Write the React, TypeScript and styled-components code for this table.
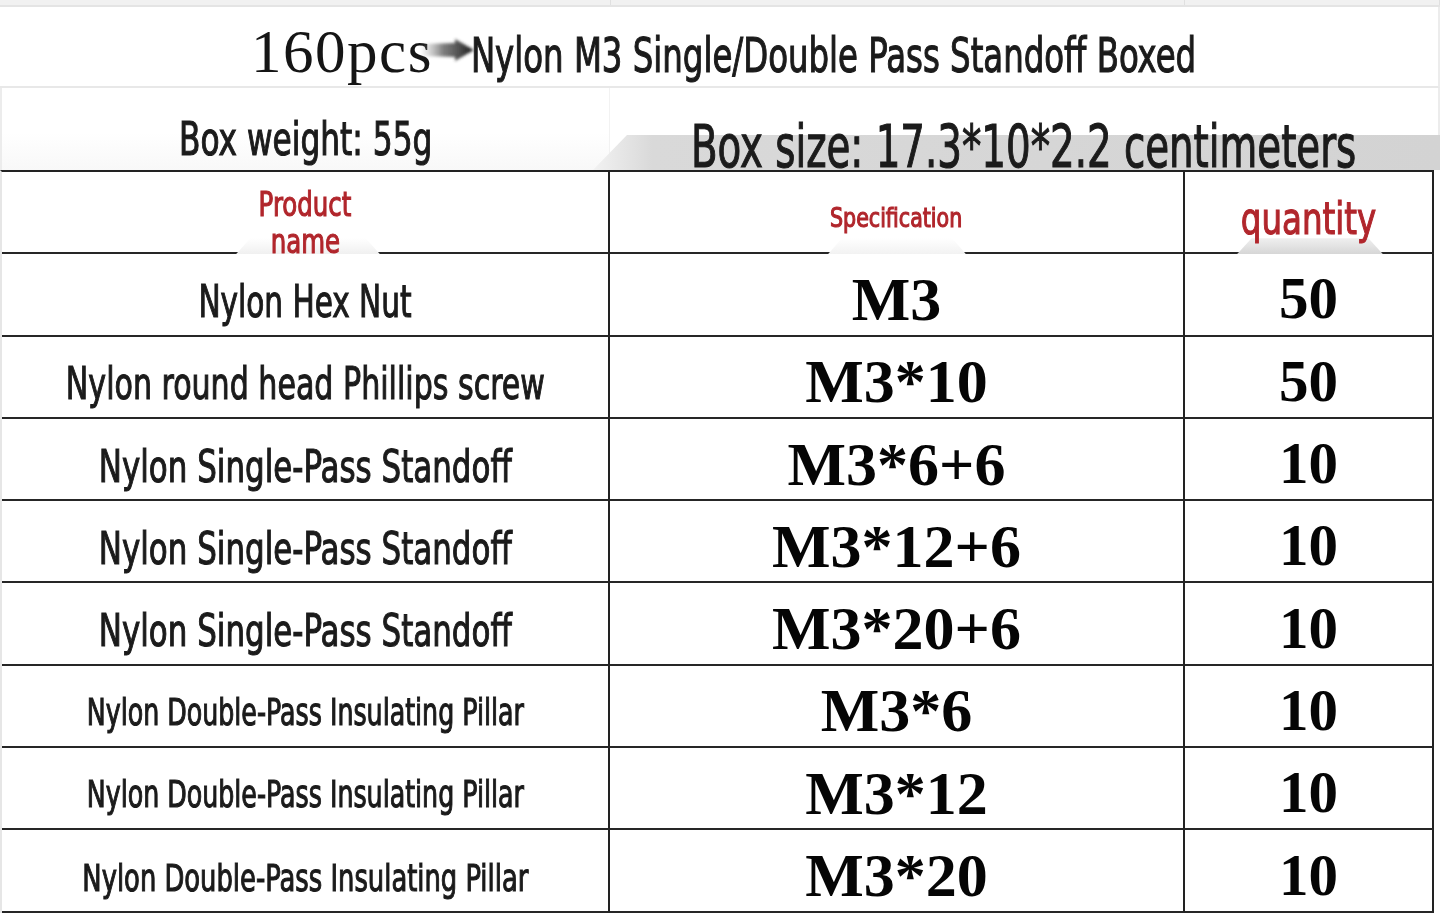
import React from "react";
import styled, { createGlobalStyle } from "styled-components";

const Global = createGlobalStyle`
  html, body { margin: 0; padding: 0; background: #fff; }
  body { width: 1440px; height: 917px; overflow: hidden; }
`;

const COND = `"DejaVu Sans Condensed", "DejaVu Sans", sans-serif`;
const SERIF = `"Liberation Serif", "Times New Roman", serif`;

const Page = styled.div`
  width: 1440px;
  height: 917px;
  background: #fff;
  display: flex;
  flex-direction: column;
  overflow: hidden;
`;

const TopStrip = styled.div`
  height: 5px;
  flex: none;
  background: #f1f1f1;
  border-bottom: 2px solid #e4e4e4;
  display: grid;
  grid-template-columns: 611px 574px 1fr;
  & > div { border-right: 1px solid #e0e0e0; }
`;

const TitleRow = styled.div`
  height: 81px;
  flex: none;
  box-sizing: border-box;
  border-bottom: 2px solid #e8e8e8;
  border-right: 2px solid #ececec;
  display: flex;
  align-items: baseline;
  justify-content: center;
  padding: 14px 0 0 8px;
`;

const Pcs = styled.span`
  font-family: ${SERIF};
  font-size: 61px;
  letter-spacing: 1.5px;
  color: #151515;
  line-height: 1;
`;

const ArrowSvg = styled.svg`
  align-self: flex-start;
  margin: 15px -4px 0 -14px;
  flex: none;
`;

const TitleBox = styled.span`
  display: inline-flex;
  justify-content: center;
  width: 722px;
  font-family: ${COND};
  font-size: 48px;
  line-height: 1;
  color: #1b1b1b;
`;

const Squeeze = styled.span<{ $s: number }>`
  display: inline-block;
  white-space: nowrap;
  transform: scaleX(${(p) => p.$s});
  transform-origin: center;
  -webkit-text-stroke: 1.1px currentColor;
`;

const InfoRow = styled.div`
  height: 82px;
  flex: none;
  display: grid;
  grid-template-columns: 610px minmax(0, 1fr);
  box-sizing: border-box;
`;

const WeightCell = styled.div`
  min-width: 0;
  display: flex;
  align-items: flex-end;
  justify-content: center;
  padding-bottom: 8px;
  font-family: ${COND};
  font-size: 46px;
  line-height: 1;
  color: #1b1b1b;
  border-left: 2px solid #ececec;
  border-right: 1px solid #f2f2f2;
  background: linear-gradient(180deg, #fff 55%, #f8f8f8 100%);
`;

const SizeCell = styled.div`
  min-width: 0;
  position: relative;
  display: flex;
  align-items: flex-end;
  justify-content: center;
  font-family: ${COND};
  font-size: 59px;
  line-height: 1;
  color: #1b1b1b;
  border-right: 2px solid #ececec;
`;

const SizeBand = styled.div`
  position: absolute;
  left: -17px;
  right: -2px;
  bottom: 0;
  height: 35px;
  background: linear-gradient(90deg, #f2f2f2 0%, #d9d9d9 7%, #d3d3d3 100%);
  clip-path: polygon(34px 0, 100% 0, 100% 100%, 0 100%);
`;

const SizeText = styled.span`
  position: relative;
  margin-bottom: -6px;
`;

const Table = styled.div`
  display: grid;
  grid-template-columns: 608px 575px 249px;
  grid-auto-rows: 82.3px;
  border-top: 2px solid #222;
  border-left: 2px solid #e6e6e6;
  width: 1434px;
  box-sizing: border-box;
  flex: none;
`;

const Cell = styled.div`
  position: relative;
  min-width: 0;
  box-sizing: border-box;
  border-bottom: 2px solid #262626;
  border-right: 2px solid #222;
  display: flex;
  align-items: center;
  justify-content: center;
  text-align: center;
`;

const HeadLabel = styled.span<{ $size: number; $lh: number; $pad: number }>`
  font-family: ${COND};
  color: #b1262c;
  font-size: ${(p) => p.$size}px;
  line-height: ${(p) => p.$lh}px;
  padding-top: ${(p) => p.$pad}px;
  position: relative;
  z-index: 1;
  display: flex;
  flex-direction: column;
  align-items: center;
`;

const NameText = styled.span<{ $size: number; $pad: number }>`
  font-family: ${COND};
  color: #1b1b1b;
  font-size: ${(p) => p.$size}px;
  line-height: 1;
  padding-top: ${(p) => p.$pad}px;
`;

const NumText = styled.span<{ $size: number }>`
  font-family: ${SERIF};
  font-weight: 700;
  color: #050505;
  font-size: ${(p) => p.$size}px;
  line-height: 1;
  padding-top: 9px;
`;

const Tab = styled.div<{ $left: number; $width: number; $bg: string }>`
  position: absolute;
  bottom: -2px;
  left: ${(p) => p.$left}px;
  width: ${(p) => p.$width}px;
  height: 16px;
  background: ${(p) => p.$bg};
  clip-path: polygon(10% 0, 90% 0, 100% 100%, 0 100%);
`;

const rows = [
  { name: "Nylon Hex Nut", size: 45, s: 0.73, pad: 14, spec: "M3", qty: "50" },
  { name: "Nylon round head Phillips screw", size: 45, s: 0.743, pad: 14, spec: "M3*10", qty: "50" },
  { name: "Nylon Single-Pass Standoff", size: 45, s: 0.764, pad: 14, spec: "M3*6+6", qty: "10" },
  { name: "Nylon Single-Pass Standoff", size: 45, s: 0.764, pad: 14, spec: "M3*12+6", qty: "10" },
  { name: "Nylon Single-Pass Standoff", size: 45, s: 0.764, pad: 14, spec: "M3*20+6", qty: "10" },
  { name: "Nylon Double-Pass Insulating Pillar", size: 38, s: 0.74, pad: 12, spec: "M3*6", qty: "10" },
  { name: "Nylon Double-Pass Insulating Pillar", size: 38, s: 0.74, pad: 12, spec: "M3*12", qty: "10" },
  { name: "Nylon Double-Pass Insulating Pillar", size: 38, s: 0.755, pad: 14, spec: "M3*20", qty: "10" },
];

export default function App() {
  return (
    <>
      <Global />
      <Page>
        <TopStrip>
          <div />
          <div />
          <div />
        </TopStrip>
        <TitleRow>
          <Pcs>160pcs</Pcs>
          <ArrowSvg width="58" height="28" viewBox="0 0 58 28">
            <defs>
              <linearGradient id="ag" x1="0" x2="1" y1="0" y2="0">
                <stop offset="0" stopColor="#999" stopOpacity="0.1" />
                <stop offset="0.4" stopColor="#555" stopOpacity="0.75" />
                <stop offset="1" stopColor="#1a1a1a" />
              </linearGradient>
              <filter id="ab" x="-10%" y="-30%" width="120%" height="160%">
                <feGaussianBlur stdDeviation="1.4" />
              </filter>
            </defs>
            <polygon
              points="3,8 36,7 36,3 55,14 36,25 36,21 3,20"
              fill="url(#ag)"
              filter="url(#ab)"
            />
          </ArrowSvg>
          <TitleBox>
            <Squeeze $s={0.75}>Nylon M3 Single/Double Pass Standoff Boxed</Squeeze>
          </TitleBox>
        </TitleRow>
        <InfoRow>
          <WeightCell>
            <Squeeze $s={0.755}>Box weight: 55g</Squeeze>
          </WeightCell>
          <SizeCell>
            <SizeBand />
            <SizeText>
              <Squeeze $s={0.73}>Box size: 17.3*10*2.2 centimeters</Squeeze>
            </SizeText>
          </SizeCell>
        </InfoRow>
        <Table>
          <Cell>
            <HeadLabel $size={34} $lh={37} $pad={22}>
              <Squeeze $s={0.8}>Product</Squeeze>
              <Squeeze $s={0.8}>name</Squeeze>
            </HeadLabel>
            <Tab $left={234} $width={144} $bg="linear-gradient(180deg,#ffffff 0%,#f0f0f0 100%)" />
          </Cell>
          <Cell>
            <HeadLabel $size={26} $lh={26} $pad={11}>
              <Squeeze $s={0.88}>Specification</Squeeze>
            </HeadLabel>
            <Tab $left={218} $width={138} $bg="linear-gradient(180deg,#ffffff 0%,#f2f2f2 100%)" />
          </Cell>
          <Cell>
            <HeadLabel $size={44} $lh={44} $pad={14}>
              <Squeeze $s={0.82}>quantity</Squeeze>
            </HeadLabel>
            <Tab $left={52} $width={146} $bg="linear-gradient(180deg,#f0f0f0 0%,#d6d6d6 100%)" />
          </Cell>
          {rows.map((r, i) => (
            <React.Fragment key={i}>
              <Cell>
                <NameText $size={r.size} $pad={r.pad}>
                  <Squeeze $s={r.s}>{r.name}</Squeeze>
                </NameText>
              </Cell>
              <Cell>
                <NumText $size={62}>{r.spec}</NumText>
              </Cell>
              <Cell>
                <NumText $size={59}>{r.qty}</NumText>
              </Cell>
            </React.Fragment>
          ))}
        </Table>
      </Page>
    </>
  );
}
